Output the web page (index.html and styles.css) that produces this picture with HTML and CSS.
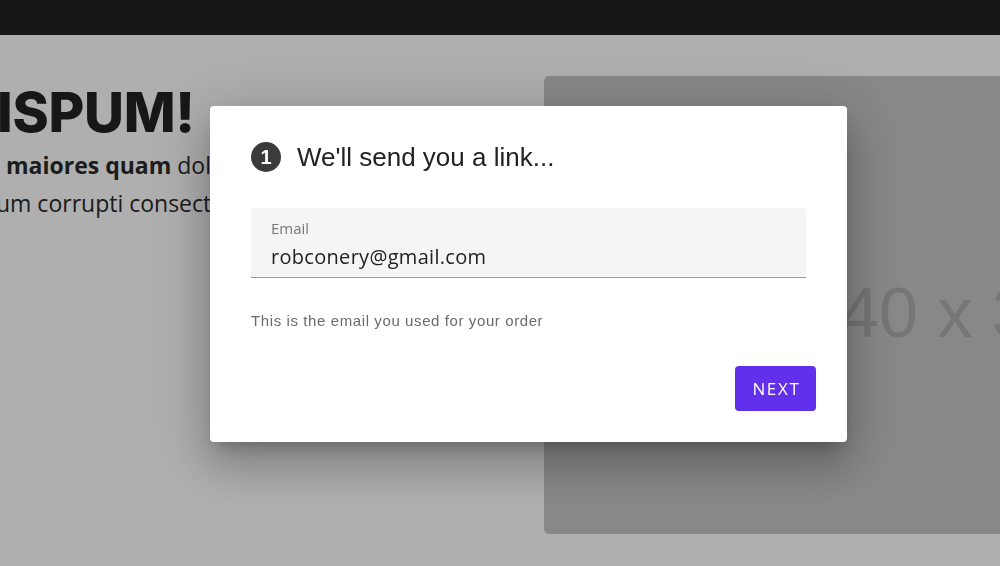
FILE: index.html
```html
<!DOCTYPE html>
<html lang="en">
<head>
<meta charset="utf-8">
<title>Send link</title>
<link rel="stylesheet" href="styles.css">
</head>
<body>
<header class="topbar"></header>
<main class="hero">
  <section class="hero-text">
    <h1 class="hero-title">ISPUM!</h1>
    <p class="hero-line first"><strong>maiores quam</strong> dolorem ipsum quia</p>
    <p class="hero-line second">um corrupti consectetur adipisci velit</p>
  </section>
  <div class="placeholder"><span>640 x 360</span></div>
</main>

<div class="overlay">
  <div class="dialog" role="dialog">
    <div class="dialog-title">
      <span class="step">1</span>
      <h2>We'll send you a link...</h2>
    </div>
    <div class="field">
      <label class="field-label">Email</label>
      <div class="field-value">robconery@gmail.com</div>
    </div>
    <p class="helper">This is the email you used for your order</p>
    <div class="actions">
      <button class="btn-next">NEXT</button>
    </div>
  </div>
</div>
</body>
</html>
```
FILE: styles.css
```css
* { box-sizing: border-box; }
html, body { margin: 0; padding: 0; }
body {
  width: 1000px;
  height: 566px;
  overflow: hidden;
  background: #ffffff;
  font-family: "Open Sans", "Liberation Sans", sans-serif;
  color: #232323;
}
.topbar {
  height: 35px;
  background: #202020;
}
.hero {
  display: flex;
  padding-top: 41px;
}
.hero-text {
  flex: none;
  width: 544px;
  overflow: hidden;
}
.hero-title {
  margin: 8px 0 0 -3px;
  font-family: Inter, "Liberation Sans", sans-serif;
  font-weight: 800;
  font-size: 55px;
  line-height: 56px;
  letter-spacing: -0.3px;
  color: #222;
  white-space: nowrap;
}
.hero-line {
  margin: 0;
  font-size: 23px;
  line-height: 38px;
  white-space: nowrap;
  color: #2a2a2a;
}
.hero-line.first { margin-top: 6px; padding-left: 6px; }
.hero-line.second { margin-left: -4px; }
.hero-line strong { font-weight: 700; }
.placeholder {
  flex: none;
  width: 822px;
  height: 458px;
  border-radius: 5px;
  background: #c7c7c7;
  display: flex;
  align-items: center;
  justify-content: center;
}
.placeholder span {
  font-family: "Liberation Sans", Arial, sans-serif;
  font-size: 70px;
  color: #acacac;
  margin-top: 16px;
}

.overlay {
  position: fixed;
  inset: 0;
  background: rgba(0, 0, 0, 0.314);
}
.dialog {
  width: 637px;
  margin: 106px 0 0 210px;
  background: #fff;
  border-radius: 4px;
  padding: 36px 0 31px;
  box-shadow: 0 11px 15px -7px rgba(0,0,0,.22), 0 24px 38px 3px rgba(0,0,0,.16), 0 9px 60px 12px rgba(0,0,0,.15);
}
.dialog-title {
  display: flex;
  align-items: center;
  gap: 16px;
  padding: 0 41px;
  height: 30px;
}
.step {
  flex: none;
  width: 30px;
  height: 30px;
  border-radius: 50%;
  background: #3b3b3b;
  color: #fff;
  display: flex;
  align-items: center;
  justify-content: center;
  font-family: "Liberation Sans", Arial, sans-serif;
  font-weight: 700;
  font-size: 20px;
}
.dialog-title h2 {
  margin: 0;
  font-family: "Liberation Sans", Arial, sans-serif;
  font-weight: 400;
  font-size: 26px;
  line-height: 30px;
  color: #222;
}
.field {
  margin: 36px 41px 0;
  background: #f5f5f5;
  border-radius: 4px 4px 0 0;
  border-bottom: 1px solid #9b9b9b;
  padding: 10px 20px 6px;
}
.field-label {
  display: block;
  font-size: 15px;
  line-height: 20px;
  color: #777;
}
.field-value {
  margin-top: 5px;
  font-size: 20px;
  line-height: 28px;
  letter-spacing: 0.3px;
  color: #222;
}
.helper {
  margin: 33px 41px 0;
  font-family: "Liberation Sans", Arial, sans-serif;
  font-size: 15px;
  line-height: 20px;
  letter-spacing: 0.6px;
  color: #6b6b6b;
}
.actions {
  display: flex;
  justify-content: flex-end;
  padding: 0 31px;
  margin-top: 35px;
}
.btn-next {
  width: 81px;
  height: 45px;
  border: none;
  border-radius: 4px;
  background: #6230ed;
  color: #fff;
  font-family: "Open Sans", sans-serif;
  font-size: 17px;
  letter-spacing: 1.7px;
  padding: 0 0 0 2px;
  cursor: pointer;
}
```
